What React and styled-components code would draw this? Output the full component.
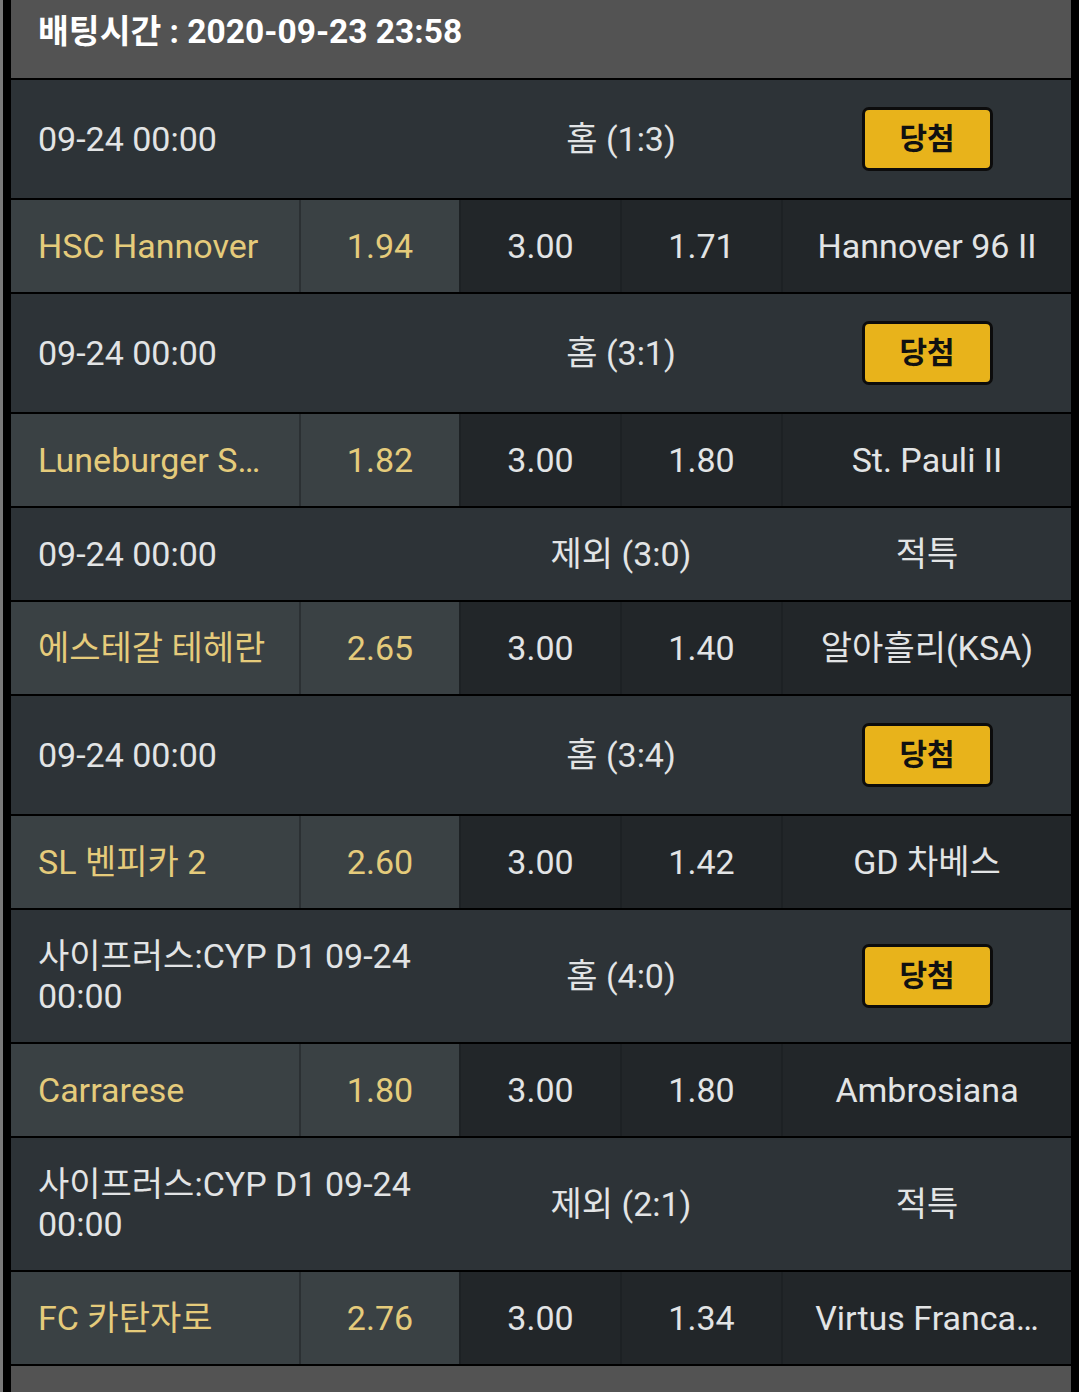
import React from "react";
import styled, { createGlobalStyle } from "styled-components";

const GlobalStyle = createGlobalStyle`
  html, body {
    margin: 0;
    padding: 0;
    background: #000;
  }
  body {
    font-family: Roboto, "Noto Sans CJK KR", sans-serif;
    border-left: 3px solid #7a7a7a;
    min-height: 1392px;
    box-sizing: border-box;
  }
`;

const games = [
  { date: "09-24 00:00", result: "홈 (1:3)", win: true, home: "HSC Hannover", h: "1.94", d: "3.00", a: "1.71", away: "Hannover 96 II" },
  { date: "09-24 00:00", result: "홈 (3:1)", win: true, home: "Luneburger S…", h: "1.82", d: "3.00", a: "1.80", away: "St. Pauli II" },
  { date: "09-24 00:00", result: "제외 (3:0)", win: false, home: "에스테갈 테헤란", h: "2.65", d: "3.00", a: "1.40", away: "알아흘리(KSA)" },
  { date: "09-24 00:00", result: "홈 (3:4)", win: true, home: "SL 벤피카 2", h: "2.60", d: "3.00", a: "1.42", away: "GD 차베스" },
  { date: "사이프러스:CYP D1 09-24 00:00", result: "홈 (4:0)", win: true, home: "Carrarese", h: "1.80", d: "3.00", a: "1.80", away: "Ambrosiana" },
  { date: "사이프러스:CYP D1 09-24 00:00", result: "제외 (2:1)", win: false, home: "FC 카탄자로", h: "2.76", d: "3.00", a: "1.34", away: "Virtus Franca…" },
];

const App = () => {
  return (
    <>
      <GlobalStyle />
      <Board>
        <Header>배팅시간 : 2020-09-23 23:58</Header>
        {games.map((g, i) => (
          <React.Fragment key={i}>
            <InfoRow>
              <DateCell>{g.date}</DateCell>
              <ResultCell>{g.result}</ResultCell>
              <StatusCell>{g.win ? <WinBadge>당첨</WinBadge> : "적특"}</StatusCell>
            </InfoRow>
            <OddsRow>
              <TeamCell $light>{g.home}</TeamCell>
              <OddCell $light $gold>{g.h}</OddCell>
              <OddCell>{g.d}</OddCell>
              <OddCell>{g.a}</OddCell>
              <OddCell>{g.away}</OddCell>
            </OddsRow>
          </React.Fragment>
        ))}
        <Footer />
      </Board>
    </>
  );
};

export default App;

const Board = styled.div`
  margin-left: 8px;
  width: 1060px;
  display: flex;
  flex-direction: column;
  gap: 2px;
  background: #000;
`;

const Header = styled.div`
  height: 78px;
  background: #535353;
  color: #fff;
  font-weight: 700;
  font-size: 33.5px;
  display: flex;
  align-items: center;
  padding: 0 27px 22px;
  box-sizing: border-box;
`;

const Footer = styled.div`
  height: 40px;
  background: #535353;
`;

const grid = `
  display: grid;
  grid-template-columns: 288px 158px 159px 159px 288px;
  column-gap: 2px;
  font-size: 34px;
  line-height: 40px;
`;

const InfoRow = styled.div`
  ${grid}
  background: #2d3337;
  color: #e2e4e5;
  padding: 26px 0;
  align-items: center;
`;

const DateCell = styled.div`
  grid-column: 1 / 3;
  padding: 0 40px 0 27px;
`;

const ResultCell = styled.div`
  grid-column: 3 / 5;
  text-align: center;
`;

const StatusCell = styled.div`
  display: flex;
  justify-content: center;
  align-items: center;
`;

const WinBadge = styled.span`
  width: 131px;
  height: 64px;
  margin: 1px 0;
  box-sizing: border-box;
  border: 3px solid #0c0c0c;
  border-radius: 7px;
  background: #e8b31b;
  color: #111;
  font-weight: 700;
  font-size: 30px;
  display: flex;
  align-items: center;
  justify-content: center;
`;

const OddsRow = styled.div`
  ${grid}
  background: #1d2124;
`;

const Cell = styled.div`
  padding: 26px 0;
  background: ${(p) => (p.$light ? "#3a4144" : "#222629")};
  color: ${(p) => (p.$gold ? "#e5cb7b" : "#e2e4e5")};
  white-space: nowrap;
  overflow: hidden;
`;

const TeamCell = styled(Cell)`
  color: #e5cb7b;
  padding-left: 27px;
  box-shadow: 2px 0 0 #2b3033;
`;

const OddCell = styled(Cell)`
  text-align: center;
`;
